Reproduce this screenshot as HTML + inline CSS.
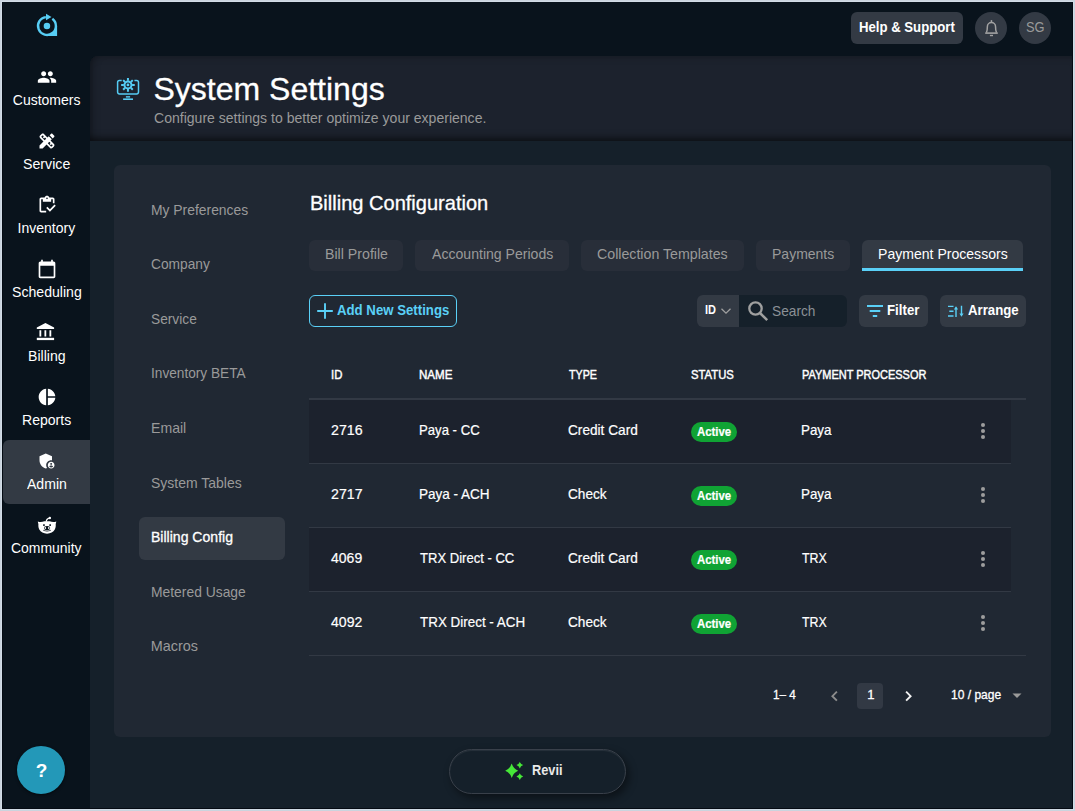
<!DOCTYPE html>
<html lang="en">
<head>
<meta charset="utf-8">
<title>System Settings - Billing Configuration</title>
<style>
*{box-sizing:border-box;margin:0;padding:0}
html,body{width:1075px;height:811px;overflow:hidden;background:#cad4de}
body{font-family:"Liberation Sans",sans-serif;color:#fff;position:relative;font-size:14px}
.b{position:absolute;display:block}
.t{position:absolute;white-space:nowrap;line-height:1;transform-origin:0 0}
</style>
</head>
<body>
<div id="backdrop">
<div class="b" style="left:1px;top:1px;width:1073px;height:809px;background:#d2dce6;"></div>
<div class="b" style="left:2px;top:2px;width:1071px;height:807px;background:#09131c;"></div>
<div class="b" style="left:90px;top:56px;width:983px;height:753px;background:#15202a;border-radius:8px 0 0 0;"></div>
<div class="b" style="left:90px;top:56px;width:983px;height:85px;background:#1c222d;border-radius:8px 0 0 0;box-shadow:inset 0 -9px 7px -6px rgba(0,0,0,.55),inset 8px 0 8px -6px rgba(0,0,0,.3),inset 0 6px 8px -6px rgba(0,0,0,.25);"></div>
<div class="b" style="left:114px;top:165px;width:937px;height:572px;background:#202833;border-radius:6px;"></div>
</div>
<aside id="sidebar" aria-label="Main navigation">
<div class="b" style="left:3px;top:440px;width:87px;height:64px;background:#333a44;border-radius:6px 0 0 6px;"></div>
<svg class="b" style="left:37px;top:67px;fill:#fff;" width="20" height="20" viewBox="0 0 24 24"><path d="M16 11c1.66 0 2.99-1.34 2.99-3S17.66 5 16 5c-1.66 0-3 1.34-3 3s1.34 3 3 3zm-8 0c1.66 0 2.99-1.34 2.99-3S9.66 5 8 5C6.34 5 5 6.34 5 8s1.34 3 3 3zm0 2c-2.33 0-7 1.17-7 3.5V19h14v-2.5c0-2.33-4.67-3.5-7-3.5zm8 0c-.29 0-.62.02-.97.05 1.16.84 1.97 1.97 1.97 3.45V19h6v-2.5c0-2.33-4.67-3.5-7-3.5z"/></svg>
<span class="t" style="left:12.79px;top:93.15px;font-size:14px;">Customers</span>
<svg class="b" style="left:37px;top:131px;fill:#fff;" width="20" height="20" viewBox="0 0 24 24"><path d="M16.24 11.51l1.57-1.57-3.75-3.75-1.57 1.57L8.35 3.63c-.78-.78-2.05-.78-2.83 0l-1.9 1.9c-.78.78-.78 2.05 0 2.83l4.13 4.13L3 17.25V21h3.75l4.76-4.76 4.13 4.13c.95.95 2.23.6 2.83 0l1.9-1.9c.78-.78.78-2.05 0-2.83l-4.13-4.13zm-7.06-.44L5.04 6.94l1.89-1.9L8.2 6.31 7.02 7.5l1.41 1.41 1.19-1.19 1.45 1.45-1.89 1.9zm7.88 7.89l-4.13-4.13 1.9-1.9 1.45 1.45-1.19 1.19 1.41 1.41 1.19-1.19 1.27 1.27-1.9 1.9z"/><path d="M20.71 7.04c.39-.39.39-1.02 0-1.41l-2.34-2.34c-.47-.47-1.12-.29-1.41 0l-1.83 1.83 3.75 3.75 1.83-1.83z"/></svg>
<span class="t" style="left:22.88px;top:157.15px;font-size:14px;transform:scaleX(1.0125);">Service</span>
<svg class="b" style="left:37px;top:195px;fill:#fff;" width="20" height="20" viewBox="0 0 24 24"><path d="M5 5h2v3h10V5h2v5h2V5c0-1.1-.9-2-2-2h-4.18C14.4 1.84 13.3 1 12 1s-2.4.84-2.82 2H5c-1.1 0-2 .9-2 2v14c0 1.1.9 2 2 2h6v-2H5V5zm7-2c.55 0 1 .45 1 1s-.45 1-1 1-1-.45-1-1 .45-1 1-1z"/><path d="M21 11.5l-5.49 5.5-3.01-3-1.5 1.5 4.51 4.5 6.99-7z"/></svg>
<span class="t" style="left:17.62px;top:221.15px;font-size:14px;">Inventory</span>
<svg class="b" style="left:37px;top:259px;fill:#fff;" width="20" height="20" viewBox="0 0 24 24"><path d="M20 3h-1V1h-2v2H7V1H5v2H4c-1.1 0-2 .9-2 2v16c0 1.1.9 2 2 2h16c1.1 0 2-.9 2-2V5c0-1.1-.9-2-2-2zm0 18H4V8h16v13z"/></svg>
<span class="t" style="left:11.68px;top:285.15px;font-size:14px;transform:scaleX(1.0070);">Scheduling</span>
<svg class="b" style="left:35px;top:320px;" width="22" height="22" viewBox="35 320 22 22"><path d="M36.800 329V327.400L45.450 323.100 54.100 327.400V329z" fill="#fff"/><path d="M39.450 330.200h1.800v6.400h-1.800zM44.450 330.200h1.800v6.400h-1.800zM49.450 330.200h1.800v6.400h-1.800z" fill="#fff"/><path d="M36.800 337.800h17.300v2.300H36.800z" fill="#fff"/></svg>
<span class="t" style="left:28.19px;top:349.15px;font-size:14px;transform:scaleX(1.0088);">Billing</span>
<svg class="b" style="left:37px;top:387px;fill:#fff;" width="20" height="20" viewBox="0 0 24 24"><path d="M11 2v20c-5.07-.5-9-4.79-9-10s3.930-9.5 9-10zm2.030 0v8.990H22c-.47-4.74-4.240-8.520-8.970-8.990zm0 11.010V22c4.740-.47 8.500-4.250 8.970-8.990h-8.970z"/></svg>
<span class="t" style="left:21.85px;top:413.15px;font-size:14px;transform:scaleX(1.0038);">Reports</span>
<svg class="b" style="left:37px;top:451px;fill:#fff;" width="20" height="20" viewBox="0 0 24 24"><path d="M17 11c.34 0 .67.04 1 .09V6.27L10.5 3 3 6.27v4.91c0 4.54 3.2 8.79 7.5 9.82.55-.13 1.08-.32 1.6-.55-.69-.98-1.1-2.17-1.1-3.45 0-3.31 2.69-6 6-6z"/><path d="M17 13c-2.21 0-4 1.79-4 4s1.79 4 4 4 4-1.79 4-4-1.79-4-4-4zm0 1.38c.62 0 1.12.51 1.12 1.12s-.51 1.12-1.12 1.12-1.12-.51-1.12-1.12.5-1.12 1.12-1.12zm0 5.37c-.93 0-1.74-.46-2.24-1.17.05-.72 1.51-1.08 2.24-1.08s2.19.36 2.24 1.08c-.5.71-1.31 1.170-2.240 1.170z"/></svg>
<span class="t" style="left:27.16px;top:477.15px;font-size:14px;transform:scaleX(1.0035);">Admin</span>
<svg class="b" style="left:36px;top:514px;" width="22" height="22" viewBox="36 514 22 22"><path d="M37.800 521.400C40 522.400 42.300 522.100 44.300 521.200L49.700 521.200C51.700 522.100 54 522.400 56.300 521.400C56.100 522.500 55.900 523.200 55.700 524C55.900 526 55.600 528 54.800 529.600C53.400 532.300 50.500 533.700 47.050 533.700C43.600 533.700 40.700 532.300 39.300 529.600C38.500 528 38.200 526 38.400 524C38.200 523.200 38 522.500 37.800 521.400z" fill="#fff"/><path d="M46.200 521.800C46.400 519.800 47.200 518.300 49.600 518.100" fill="none" stroke="#fff" stroke-width="1.300"/><circle cx="49.800" cy="518.100" r="1.250" fill="#fff"/><rect x="43.100" y="524.300" width="1.700" height="1.600" fill="#09131c"/><rect x="49.300" y="524.300" width="1.700" height="1.600" fill="#09131c"/><ellipse cx="47.050" cy="528.100" rx="3.100" ry="2.100" fill="#09131c"/><ellipse cx="45.300" cy="528" rx="0.800" ry="1.100" fill="#fff"/><ellipse cx="48.800" cy="528" rx="0.800" ry="1.100" fill="#fff"/><path d="M43.200 530.300Q47.050 532.100 50.900 530.300" fill="none" stroke="#09131c" stroke-width="0.700"/></svg>
<span class="t" style="left:11.20px;top:541.15px;font-size:14px;transform:scaleX(0.9958);">Community</span>
<svg class="b" style="left:34px;top:12px;" width="26" height="26" viewBox="34 12 26 26"><path d="M52.34 18.80A8.95 8.95 0 1 1 45.86 17.07" fill="none" stroke="#57cdf4" stroke-width="2.4"/><path d="M55.90 25.95L57.10 25.95L57.10 36.10L46.95 36.10L46.95 34.90A8.95 8.95 0 0 0 55.90 25.95z" fill="#57cdf4"/><circle cx="46.95" cy="25.95" r="3.250" fill="#57cdf4"/><path d="M46 13.700L51.500 17 46 20.200z" fill="#57cdf4"/></svg>
<div class="b" style="left:17px;top:746px;width:48px;height:48px;background:#2398b8;border-radius:50%;box-shadow:0 1px 3px rgba(0,0,0,.6);"></div>
<span class="t" style="left:35.80px;top:760.92px;font-size:19px;font-weight:700;">?</span>
</aside>
<header id="topbar">
<div class="b" style="left:851px;top:12px;width:112px;height:32px;background:#333a44;border-radius:6px;"></div>
<span class="t" style="left:859.20px;top:20.31px;font-size:14.4px;font-weight:700;transform:scaleX(0.9147);">Help &amp; Support</span>
<div class="b" style="left:975px;top:12px;width:32px;height:32px;background:#333a44;border-radius:50%;"></div>
<svg class="b" style="left:981px;top:17px;" width="22" height="22" viewBox="981 17 22 22"><g fill="none" stroke="#a2a2a2" stroke-width="1.500"><path d="M985.200 33.100H997.800" stroke-width="1.600"/><path d="M986.400 32.600C987.200 31 987.350 29 987.350 26.700a4.100 4.100 0 0 1 8.200 0C995.550 29 995.700 31 996.500 32.600"/><path d="M991.450 20.100V22.600"/><path d="M989.900 35.500H993" stroke-width="1.400"/></g></svg>
<div class="b" style="left:1019px;top:12px;width:32px;height:32px;background:#333a44;border-radius:50%;"></div>
<span class="t" style="left:1026.07px;top:20.31px;font-size:14.4px;color:#9a9a9a;transform:scaleX(0.8932);">SG</span>
</header>
<main id="content">
<section id="page-title">
<span class="t" style="left:153.48px;top:72.61px;font-size:32px;-webkit-text-stroke:0.3px #fff;">System Settings</span>
<span class="t" style="left:154.18px;top:111.21px;font-size:14.4px;color:#9a9a9a;transform:scaleX(0.9753);">Configure settings to better optimize your experience.</span>
<svg class="b" style="left:114px;top:76px;" width="28" height="26" viewBox="114 76 28 26"><g fill="none" stroke="#55ccf4" stroke-width="1.500"><path d="M121.700 80.500H119.400a1.800 1.800 0 0 0-1.800 1.800V92.100a1.800 1.800 0 0 0 1.800 1.800H136.700a1.800 1.800 0 0 0 1.800-1.800V82.300a1.800 1.800 0 0 0-1.800-1.800H134.400"/><path d="M123.100 99.200H133" stroke-width="1.600"/><circle cx="127.95" cy="84.9" r="3.500" stroke-width="2"/><path d="M132.05 84.90L134.75 84.90M130.85 87.80L132.76 89.71M127.95 89.00L127.95 91.70M125.05 87.80L123.14 89.71M123.85 84.90L121.15 84.90M125.05 82.00L123.14 80.09M127.95 80.80L127.95 78.10M130.85 82.00L132.76 80.09" stroke-width="2"/></g><circle cx="127.95" cy="84.9" r="1.400" fill="#55ccf4"/><rect x="125.900" y="96" width="4.200" height="1.700" fill="#55ccf4" opacity=".85"/></svg>
</section>
<nav id="settings-nav" aria-label="Settings">
<div class="b" style="left:139px;top:517px;width:146px;height:43px;background:#333a44;border-radius:6px;"></div>
<span class="t" style="left:151.19px;top:203.21px;font-size:14.4px;color:#9a9a9a;transform:scaleX(0.9643);">My Preferences</span>
<span class="t" style="left:151.20px;top:257.21px;font-size:14.4px;color:#9a9a9a;transform:scaleX(0.9546);">Company</span>
<span class="t" style="left:151.30px;top:311.81px;font-size:14.4px;color:#9a9a9a;transform:scaleX(0.9537);">Service</span>
<span class="t" style="left:151.15px;top:366.21px;font-size:14.4px;color:#9a9a9a;transform:scaleX(0.9495);">Inventory BETA</span>
<span class="t" style="left:150.98px;top:420.81px;font-size:14.4px;color:#9a9a9a;transform:scaleX(0.9787);">Email</span>
<span class="t" style="left:151.32px;top:475.81px;font-size:14.4px;color:#9a9a9a;transform:scaleX(0.9714);">System Tables</span>
<span class="t" style="left:151.31px;top:530.21px;font-size:14.4px;transform:scaleX(0.9758);-webkit-text-stroke:0.3px #fff;">Billing Config</span>
<span class="t" style="left:151.19px;top:585.41px;font-size:14.4px;color:#9a9a9a;transform:scaleX(0.9632);">Metered Usage</span>
<span class="t" style="left:150.86px;top:639.21px;font-size:14.4px;color:#9a9a9a;">Macros</span>
</nav>
<section id="billing-config">
<div id="tabs">
<span class="t" style="left:309.85px;top:193.64px;font-size:19.8px;transform:scaleX(1.0129);-webkit-text-stroke:0.3px #fff;">Billing Configuration</span>
<div class="b" style="left:309px;top:239.5px;width:94px;height:31.5px;background:#282e39;border-radius:6px;"></div>
<span class="t" style="left:324.86px;top:247.21px;font-size:14.4px;color:#9a9a9a;transform:scaleX(0.9848);">Bill Profile</span>
<div class="b" style="left:415px;top:239.5px;width:154px;height:31.5px;background:#282e39;border-radius:6px;"></div>
<span class="t" style="left:431.60px;top:247.21px;font-size:14.4px;color:#9a9a9a;transform:scaleX(0.9785);">Accounting Periods</span>
<div class="b" style="left:581px;top:239.5px;width:163px;height:31.5px;background:#282e39;border-radius:6px;"></div>
<span class="t" style="left:597.31px;top:247.21px;font-size:14.4px;color:#9a9a9a;transform:scaleX(0.9860);">Collection Templates</span>
<div class="b" style="left:756px;top:239.5px;width:94px;height:31.5px;background:#282e39;border-radius:6px;"></div>
<span class="t" style="left:771.76px;top:247.21px;font-size:14.4px;color:#9a9a9a;transform:scaleX(0.9731);">Payments</span>
<div class="b" style="left:862px;top:239.5px;width:161px;height:31.5px;background:#333a44;border-radius:6px 6px 0 0;border-bottom:3.500px solid #5ad0f7;"></div>
<span class="t" style="left:877.72px;top:247.21px;font-size:14.4px;transform:scaleX(0.9769);">Payment Processors</span>
</div>
<div id="toolbar">
<div class="b" style="left:309px;top:295px;width:148px;height:32px;border-radius:6px;border:1px solid #5ad0f7;"></div>
<svg class="b" style="left:317px;top:303px;" width="16" height="16" viewBox="0 0 16 16"><path d="M8 0.200v15.600M0.200 8h15.600" stroke="#5ad0f7" stroke-width="1.900" fill="none"/></svg>
<span class="t" style="left:337.22px;top:303.01px;font-size:14.4px;font-weight:700;color:#5ad0f7;transform:scaleX(0.9180);">Add New Settings</span>
<div class="b" style="left:697px;top:295px;width:42px;height:32px;background:#333a44;border-radius:6px 0 0 6px;"></div>
<span class="t" style="left:705.00px;top:304.02px;font-size:12.5px;font-weight:700;transform:scaleX(0.8800);">ID</span>
<svg class="b" style="left:721px;top:307px;" width="10" height="8" viewBox="0 0 10 8"><path d="M0.500 1.800l4.500 4.400 4.500-4.400" stroke="#a0a0a0" stroke-width="1.300" fill="none"/></svg>
<div class="b" style="left:739px;top:295px;width:108px;height:32px;background:#15202a;border-radius:0 6px 6px 0;"></div>
<svg class="b" style="left:747px;top:300px;" width="22" height="22" viewBox="0 0 22 22"><circle cx="8.500" cy="8.500" r="6.200" stroke="#a0a0a0" stroke-width="2.300" fill="none"/><path d="M13 13l7.200 7.200" stroke="#a0a0a0" stroke-width="2.500" fill="none"/></svg>
<span class="t" style="left:772.22px;top:304.21px;font-size:14.4px;color:#8b9096;transform:scaleX(0.9522);">Search</span>
<div class="b" style="left:859px;top:295px;width:69px;height:32px;background:#333a44;border-radius:6px;"></div>
<svg class="b" style="left:867px;top:303px;" width="16" height="16" viewBox="0 0 16 16"><path d="M0 3h16M2.700 8h10.600M5.800 13h4.400" stroke="#5ad0f7" stroke-width="1.800" fill="none"/></svg>
<span class="t" style="left:887.39px;top:303.01px;font-size:14.4px;font-weight:700;transform:scaleX(0.9222);">Filter</span>
<div class="b" style="left:940px;top:295px;width:86px;height:32px;background:#333a44;border-radius:6px;"></div>
<svg class="b" style="left:948px;top:303px;" width="16" height="16" viewBox="0 0 16 16"><path d="M0 3.400h5.500M1.300 8.200h4.200M0 13h5.500" stroke="#5ad0f7" stroke-width="1.400" fill="none"/><path d="M8 14V4.500M13.500 2.800V12" stroke="#5ad0f7" stroke-width="1.400" fill="none"/><path d="M5.900 6.600L8 3.300l2.100 3.300zM11.400 10.400l2.100 3.300 2.100-3.300z" fill="#5ad0f7"/></svg>
<span class="t" style="left:967.98px;top:303.01px;font-size:14.4px;font-weight:700;transform:scaleX(0.9189);">Arrange</span>
</div>
<div id="grid" role="table">
<div class="b" style="left:309px;top:398px;width:717px;height:2px;background:#323944;"></div>
<span class="t" style="left:331.21px;top:368.56px;font-size:12.8px;transform:scaleX(0.8878);-webkit-text-stroke:0.45px #fff;">ID</span>
<span class="t" style="left:419.15px;top:368.56px;font-size:12.8px;transform:scaleX(0.9048);-webkit-text-stroke:0.45px #fff;">NAME</span>
<span class="t" style="left:568.68px;top:368.56px;font-size:12.8px;transform:scaleX(0.8344);-webkit-text-stroke:0.45px #fff;">TYPE</span>
<span class="t" style="left:690.60px;top:368.56px;font-size:12.8px;transform:scaleX(0.8809);-webkit-text-stroke:0.45px #fff;">STATUS</span>
<span class="t" style="left:801.60px;top:368.56px;font-size:12.8px;transform:scaleX(0.8573);-webkit-text-stroke:0.45px #fff;">PAYMENT PROCESSOR</span>
<div class="b" style="left:309px;top:400px;width:702px;height:63px;background:#1c222d;"></div>
<div class="b" style="left:309px;top:463px;width:702px;height:1px;background:#323944;"></div>
<span class="t" style="left:331.33px;top:423.21px;font-size:14.4px;transform:scaleX(0.9871);-webkit-text-stroke:0.2px #fff;">2716</span>
<span class="t" style="left:419.10px;top:423.21px;font-size:14.4px;transform:scaleX(0.9135);-webkit-text-stroke:0.2px #fff;">Paya - CC</span>
<span class="t" style="left:568.28px;top:423.21px;font-size:14.4px;transform:scaleX(0.9483);-webkit-text-stroke:0.2px #fff;">Credit Card</span>
<div class="b" style="left:691px;top:422px;width:46px;height:20px;background:#10a334;border-radius:10px;"></div>
<span class="t" style="left:696.55px;top:425.93px;font-size:12.6px;font-weight:700;transform:scaleX(0.9048);-webkit-text-stroke:0.2px #fff;">Active</span>
<span class="t" style="left:801.22px;top:423.21px;font-size:14.4px;transform:scaleX(0.9292);-webkit-text-stroke:0.2px #fff;">Paya</span>
<svg class="b" style="left:980px;top:422px;" width="6" height="18" viewBox="0 0 6 18"><circle cx="3" cy="3" r="2.050" fill="#9d9d9d"/><circle cx="3" cy="9" r="2.050" fill="#9d9d9d"/><circle cx="3" cy="15" r="2.050" fill="#9d9d9d"/></svg>
<div class="b" style="left:309px;top:527px;width:702px;height:1px;background:#323944;"></div>
<span class="t" style="left:331.33px;top:487.21px;font-size:14.4px;transform:scaleX(0.9874);-webkit-text-stroke:0.2px #fff;">2717</span>
<span class="t" style="left:419.22px;top:487.21px;font-size:14.4px;transform:scaleX(0.9394);-webkit-text-stroke:0.2px #fff;">Paya - ACH</span>
<span class="t" style="left:568.33px;top:487.21px;font-size:14.4px;transform:scaleX(0.9469);-webkit-text-stroke:0.2px #fff;">Check</span>
<div class="b" style="left:691px;top:486px;width:46px;height:20px;background:#10a334;border-radius:10px;"></div>
<span class="t" style="left:696.55px;top:489.93px;font-size:12.6px;font-weight:700;transform:scaleX(0.9048);-webkit-text-stroke:0.2px #fff;">Active</span>
<span class="t" style="left:801.22px;top:487.21px;font-size:14.4px;transform:scaleX(0.9292);-webkit-text-stroke:0.2px #fff;">Paya</span>
<svg class="b" style="left:980px;top:486px;" width="6" height="18" viewBox="0 0 6 18"><circle cx="3" cy="3" r="2.050" fill="#9d9d9d"/><circle cx="3" cy="9" r="2.050" fill="#9d9d9d"/><circle cx="3" cy="15" r="2.050" fill="#9d9d9d"/></svg>
<div class="b" style="left:309px;top:528px;width:702px;height:63px;background:#1c222d;"></div>
<div class="b" style="left:309px;top:591px;width:702px;height:1px;background:#323944;"></div>
<span class="t" style="left:331.20px;top:551.21px;font-size:14.4px;transform:scaleX(0.9738);-webkit-text-stroke:0.2px #fff;">4069</span>
<span class="t" style="left:419.51px;top:551.21px;font-size:14.4px;transform:scaleX(0.9070);-webkit-text-stroke:0.2px #fff;">TRX Direct - CC</span>
<span class="t" style="left:568.28px;top:551.21px;font-size:14.4px;transform:scaleX(0.9483);-webkit-text-stroke:0.2px #fff;">Credit Card</span>
<div class="b" style="left:691px;top:550px;width:46px;height:20px;background:#10a334;border-radius:10px;"></div>
<span class="t" style="left:696.55px;top:553.93px;font-size:12.6px;font-weight:700;transform:scaleX(0.9048);-webkit-text-stroke:0.2px #fff;">Active</span>
<span class="t" style="left:801.51px;top:551.21px;font-size:14.4px;transform:scaleX(0.8631);-webkit-text-stroke:0.2px #fff;">TRX</span>
<svg class="b" style="left:980px;top:550px;" width="6" height="18" viewBox="0 0 6 18"><circle cx="3" cy="3" r="2.050" fill="#9d9d9d"/><circle cx="3" cy="9" r="2.050" fill="#9d9d9d"/><circle cx="3" cy="15" r="2.050" fill="#9d9d9d"/></svg>
<div class="b" style="left:309px;top:655px;width:717px;height:1px;background:#323944;"></div>
<span class="t" style="left:331.14px;top:615.21px;font-size:14.4px;transform:scaleX(0.9771);-webkit-text-stroke:0.2px #fff;">4092</span>
<span class="t" style="left:419.51px;top:615.21px;font-size:14.4px;transform:scaleX(0.9325);-webkit-text-stroke:0.2px #fff;">TRX Direct - ACH</span>
<span class="t" style="left:568.33px;top:615.21px;font-size:14.4px;transform:scaleX(0.9469);-webkit-text-stroke:0.2px #fff;">Check</span>
<div class="b" style="left:691px;top:614px;width:46px;height:20px;background:#10a334;border-radius:10px;"></div>
<span class="t" style="left:696.55px;top:617.93px;font-size:12.6px;font-weight:700;transform:scaleX(0.9048);-webkit-text-stroke:0.2px #fff;">Active</span>
<span class="t" style="left:801.51px;top:615.21px;font-size:14.4px;transform:scaleX(0.8631);-webkit-text-stroke:0.2px #fff;">TRX</span>
<svg class="b" style="left:980px;top:614px;" width="6" height="18" viewBox="0 0 6 18"><circle cx="3" cy="3" r="2.050" fill="#9d9d9d"/><circle cx="3" cy="9" r="2.050" fill="#9d9d9d"/><circle cx="3" cy="15" r="2.050" fill="#9d9d9d"/></svg>
</div>
<div id="pagination">
<span class="t" style="left:773.19px;top:687.80px;font-size:13px;transform:scaleX(0.9017);-webkit-text-stroke:0.3px #fff;">1– 4</span>
<svg class="b" style="left:830px;top:690px;" width="10" height="12" viewBox="0 0 10 12"><path d="M6.900 1.700L2.400 6.200l4.500 4.500" stroke="#8c8c8c" stroke-width="1.900" fill="none"/></svg>
<div class="b" style="left:857px;top:683px;width:26px;height:26px;background:#323944;border-radius:4px;"></div>
<span class="t" style="left:867.34px;top:687.80px;font-size:13px;-webkit-text-stroke:0.3px #fff;">1</span>
<svg class="b" style="left:903px;top:690px;" width="10" height="12" viewBox="0 0 10 12"><path d="M3.100 1.700l4.500 4.500-4.500 4.500" stroke="#f2f2f2" stroke-width="1.900" fill="none"/></svg>
<span class="t" style="left:950.80px;top:687.80px;font-size:13px;transform:scaleX(0.9260);-webkit-text-stroke:0.3px #fff;">10 / page</span>
<svg class="b" style="left:1012px;top:693px;" width="10" height="6" viewBox="0 0 10 6"><path d="M0.500 0.500h9L5 5z" fill="#9a9a9a"/></svg>
</div>
</section>
</main>
<footer id="assistant">
<div class="b" style="left:449px;top:749px;width:177px;height:45px;background:#15202a;border-radius:22.5px;border:1px solid #39404a;box-shadow:3px 4px 8px rgba(0,0,0,.45),inset 0 1px 1px rgba(255,255,255,.08);"></div>
<svg class="b" style="left:503px;top:760px;" width="24" height="22" viewBox="503 760 24 22"><path d="M511.70 763.50Q513.39 768.83 518.20 770.70Q513.39 772.57 511.70 777.90Q510.01 772.57 505.20 770.70Q510.01 768.83 511.70 763.50zM519.80 761.70Q520.62 764.28 523.20 765.10Q520.62 765.92 519.80 768.50Q518.98 765.92 516.40 765.10Q518.98 764.28 519.80 761.70zM519.80 773.20Q520.62 775.78 523.20 776.60Q520.62 777.42 519.80 780.00Q518.98 777.42 516.40 776.60Q518.98 775.78 519.80 773.20z" fill="#46e838"/></svg>
<span class="t" style="left:532.45px;top:762.81px;font-size:14.4px;font-weight:700;color:#e9e9e9;transform:scaleX(0.8867);">Revii</span>
</footer>
<div class="b" style="left:2px;top:2px;width:1071px;height:807px;border:1px solid #050b13;border-top-color:transparent;pointer-events:none;"></div>
</body>
</html>
